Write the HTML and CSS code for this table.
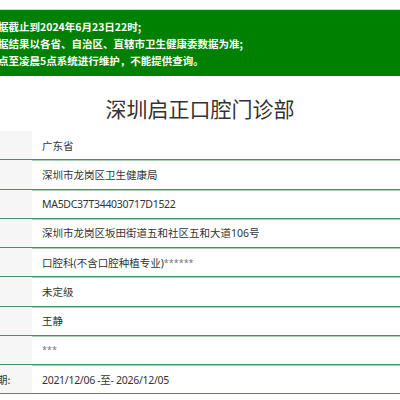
FILE: index.html
```html
<!DOCTYPE html>
<html lang="zh-CN">
<head>
<meta charset="utf-8">
<title>深圳启正口腔门诊部</title>
<link rel="stylesheet" href="styles.css">
</head>
<body>
<div class="topbar"></div>
<div class="notice">
  <p class="notice-line">据截止到2024年6月23日22时;</p>
  <p class="notice-line">据结果以各省、自治区、直辖市卫生健康委数据为准;</p>
  <p class="notice-line">点至凌晨5点系统进行维护，不能提供查询。</p>
</div>
<h1 class="title">深圳启正口腔门诊部</h1>
<div class="table">
  <div class="row"><div class="label">省份:</div><div class="value">广东省</div></div>
  <div class="row"><div class="label">登记机关:</div><div class="value">深圳市龙岗区卫生健康局</div></div>
  <div class="row"><div class="label">登记号:</div><div class="value latin">MA5DC37T344030717D1522</div></div>
  <div class="row"><div class="label">地址:</div><div class="value">深圳市龙岗区坂田街道五和社区五和大道106号</div></div>
  <div class="row"><div class="label">诊疗科目:</div><div class="value">口腔科(不含口腔种植专业)<span class="stars">******</span></div></div>
  <div class="row"><div class="label">医院等级:</div><div class="value">未定级</div></div>
  <div class="row"><div class="label">负责人:</div><div class="value">王静</div></div>
  <div class="row"><div class="label">法人:</div><div class="value"><span class="stars">***</span></div></div>
  <div class="row"><div class="label">执业有效期:</div><div class="value latin">2021/12/06 -至- 2026/12/05</div></div>
</div>
</body>
</html>
```
FILE: styles.css
```css
html, body {
  margin: 0;
  padding: 0;
  background: #fff;
  overflow: hidden;
}
body {
  width: 400px;
  font-family: "Noto Sans", "Noto Sans CJK SC", sans-serif;
  color: #333;
}
.topbar {
  height: 9px;
  border-bottom: 1px solid #d6d6d6;
}
.notice {
  background: #008000;
  height: 66px;
  box-sizing: border-box;
  padding-top: 8px;
  overflow: hidden;
}
.notice-line {
  margin: 0 0 0 -2px;
  color: #fff;
  font-family: "Noto Sans CJK SC", sans-serif;
  font-weight: 700;
  font-size: 10.5px;
  line-height: 17px;
  white-space: nowrap;
}
.title {
  margin: 20px 0 11px;
  text-align: center;
  font-family: "Noto Sans CJK SC", sans-serif;
  font-weight: 400;
  font-size: 21px;
  line-height: 24px;
  color: #333;
}
.table {
  display: flex;
  flex-direction: column;
}
.row {
  display: flex;
  height: 29.25px;
  box-sizing: border-box;
  border-bottom: 1px solid #3f9566;
  box-shadow: 0 1px 0 #a6d2b7;
}
.label {
  width: 32px;
  flex: none;
  background: #f6f6f6;
  display: flex;
  align-items: center;
  white-space: nowrap;
  text-indent: -45px;
  overflow: hidden;
  font-family: "Noto Sans CJK SC", sans-serif;
  font-size: 10.5px;
  color: #333;
}
.value {
  flex: 1;
  display: flex;
  align-items: center;
  padding-left: 10px;
  white-space: nowrap;
  font-size: 10.5px;
  color: #333;
}
.latin {
  letter-spacing: -0.3px;
}
.stars {
  color: #777;
  font-size: 9px;
}
```
